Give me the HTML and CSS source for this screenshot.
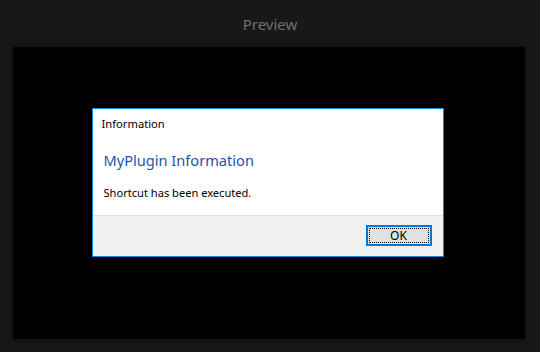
FILE: index.html
```html
<!DOCTYPE html>
<html>
<head>
<meta charset="utf-8">
<link rel="stylesheet" href="styles.css">
</head>
<body>
<div class="header">Preview</div>
<div class="preview">
  <div class="dialog">
    <div class="dialog-title">Information</div>
    <div class="dialog-body">
      <div class="main-instruction">MyPlugin Information</div>
      <div class="content">Shortcut has been executed.</div>
    </div>
    <div class="dialog-footer">
      <button class="btn"><span class="focus">OK</span></button>
    </div>
  </div>
</div>
</body>
</html>
```
FILE: styles.css
```css
html, body {
  margin: 0;
  padding: 0;
  background: #181818;
  width: 540px;
  height: 352px;
  overflow: hidden;
  font-family: "Noto Sans", "Open Sans", sans-serif;
}
.header {
  height: 47px;
  box-sizing: border-box;
  padding-top: 14px;
  text-align: center;
  color: #6e7073;
  font-size: 15px;
  line-height: 20px;
}
.preview {
  margin: 0 15px 0 13px;
  height: 292px;
  background: #000;
  box-shadow: 0 0 8px 2px rgba(0,0,0,0.35);
  display: flex;
  justify-content: center;
  align-items: flex-start;
  padding-top: 61px;
  box-sizing: border-box;
}
.dialog {
  width: 352px;
  height: 149px;
  box-sizing: border-box;
  border: 1px solid #1883d7;
  background: #fff;
  display: flex;
  flex-direction: column;
  margin-left: -3px;
}
.dialog-title {
  height: 28px;
  padding: 7px 0 0 9px;
  box-sizing: border-box;
  font-size: 11.2px;
  line-height: 16px;
  color: #000;
}
.dialog-body {
  flex: 1;
  padding: 0 0 0 11px;
}
.main-instruction {
  color: #1f54a8;
  font-size: 14.6px;
  line-height: 20px;
  padding-top: 13px;
}
.content {
  font-size: 11.1px;
  line-height: 16px;
  color: #000;
  padding-top: 15px;
}
.dialog-footer {
  height: 41px;
  box-sizing: border-box;
  border-top: 1px solid #dfdfdf;
  background: #f0f0f0;
  display: flex;
  justify-content: flex-end;
  padding: 9px 11px 0 0;
}
.btn {
  width: 66px;
  height: 21px;
  box-sizing: border-box;
  border: 2px solid #0078d7;
  background: #e1e1e1;
  padding: 1px;
  margin: 0;
  font-family: inherit;
  font-size: 12px;
  color: #000;
  display: flex;
}
.focus {
  flex: 1;
  border: 1px dotted #000;
  display: flex;
  align-items: center;
  justify-content: center;
  line-height: 13px;
}
```
